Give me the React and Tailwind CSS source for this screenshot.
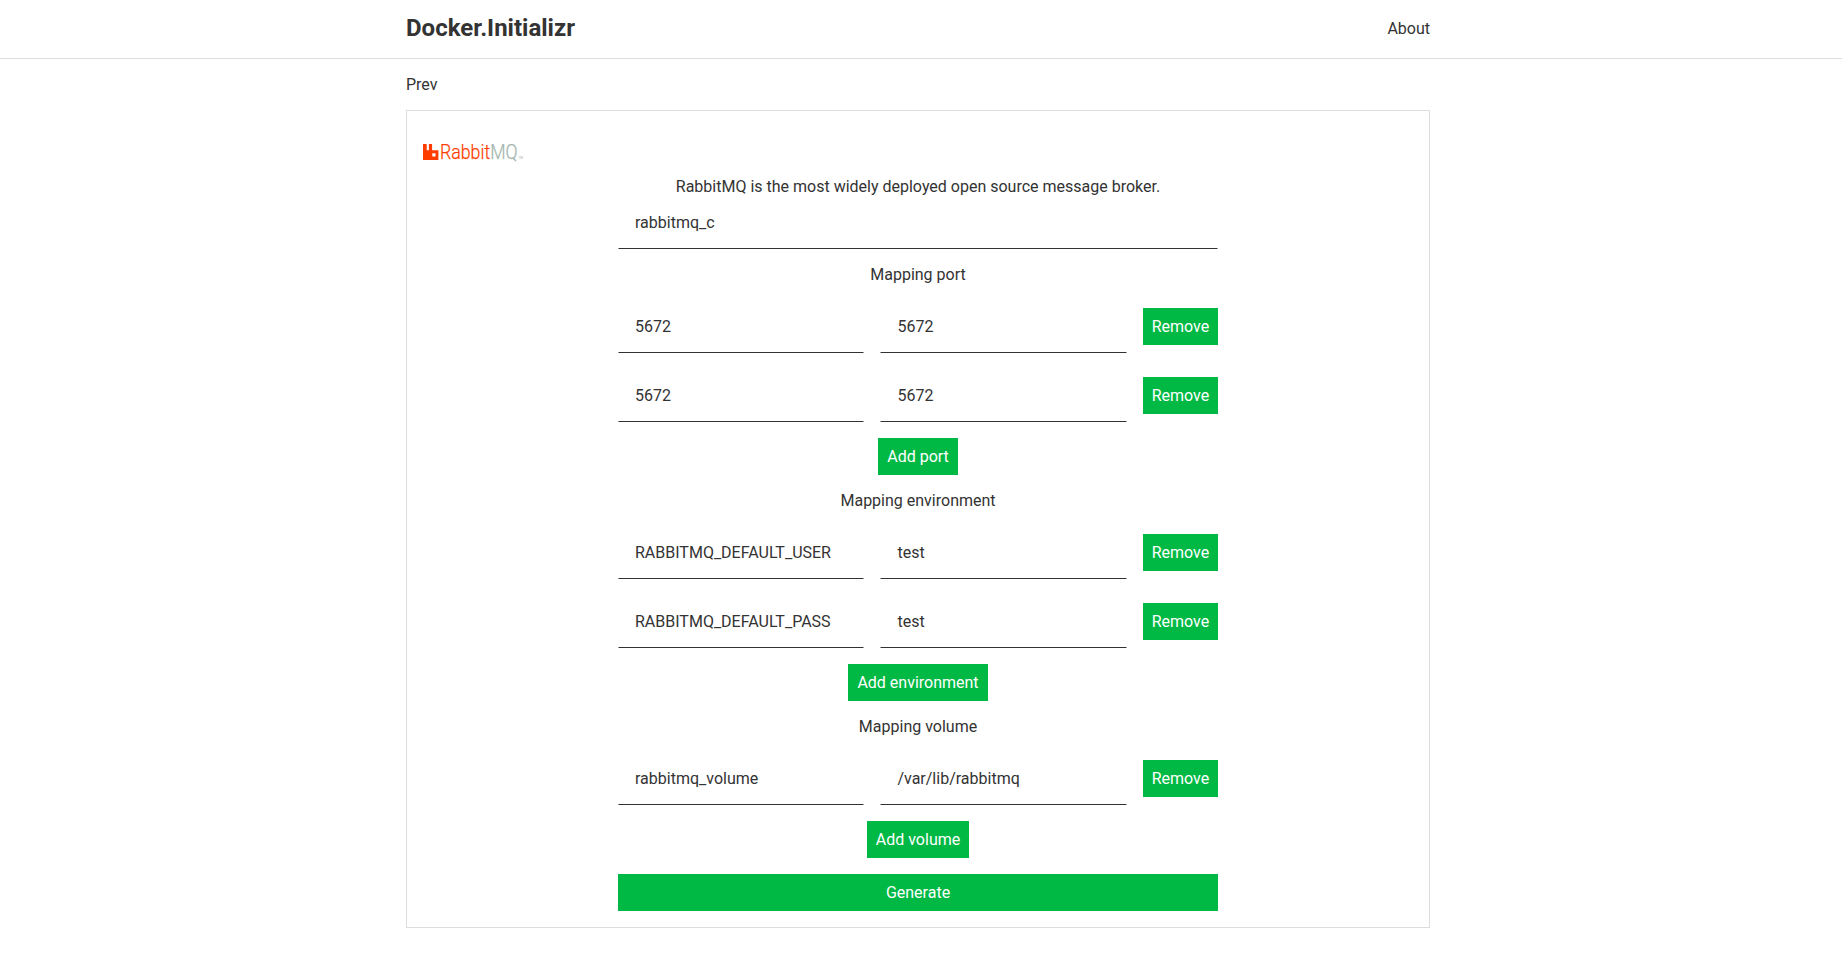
const FIELD =
  "block w-full min-w-0 h-[53px] p-4 leading-[19px] bg-transparent border border-transparent border-b-[#333333] outline-none rounded-none";
const BUTTON =
  "h-[37px] p-2 leading-[19px] border border-[#00b944] bg-[#00b944] text-white rounded-none";
const REMOVE_BUTTON =
  "h-[37px] w-[75.2px] py-2 leading-[19px] bg-[#00b944] text-white rounded-none";

const SECTIONS = [
  {
    title: "Mapping port",
    action: "Add port",
    rows: [
      ["5672", "5672"],
      ["5672", "5672"],
    ],
  },
  {
    title: "Mapping environment",
    action: "Add environment",
    rows: [
      ["RABBITMQ_DEFAULT_USER", "test"],
      ["RABBITMQ_DEFAULT_PASS", "test"],
    ],
  },
  {
    title: "Mapping volume",
    action: "Add volume",
    rows: [["rabbitmq_volume", "/var/lib/rabbitmq"]],
  },
];

function RabbitLogo() {
  return (
    <svg className="block" width="100" height="50" viewBox="0 0 100 50" role="img" aria-label="RabbitMQ">
      <path
        fill="#ff3c00"
        fillRule="evenodd"
        d="M0.300 17h3.100q.3 0 .3.300v5.700q0 .3.3.3h1.600q.3 0 .3-.3v-5.700q0-.3.3-.3h2.600q.3 0 .3.300v5.700q0 .3.3.3h5.700q.3 0 .3.300v9.100q0 .3-.3.300H.300q-.3 0-.3-.3V17.300q0-.3.3-.3zM9.300 26.300v3.200h3.200v-3.200z"
      />
      <text
        x="17"
        y="32"
        fontFamily="Roboto, sans-serif"
        fontWeight="300"
        fontSize="21"
        strokeWidth="0.25"
        textLength="77.500"
        lengthAdjust="spacingAndGlyphs"
      >
        <tspan fill="#ff3c00" stroke="#ff3c00">Rabbit</tspan>
        <tspan fill="#a3b5ae" stroke="#a3b5ae">MQ</tspan>
      </text>
      <text x="95.500" y="32" fill="#a3b5ae" fontFamily="Roboto, sans-serif" fontSize="3">
        TM
      </text>
    </svg>
  );
}

function MappingSection({ title, action, rows }) {
  return (
    <section className="flex flex-col items-center gap-4">
      <h2>{title}</h2>
      {rows.map(([left, right], i) => (
        <div key={i} className="grid w-full grid-cols-[1fr_1fr_auto] items-center gap-4">
          <input className={FIELD} defaultValue={left} />
          <input className={FIELD} defaultValue={right} />
          <button className={REMOVE_BUTTON}>Remove</button>
        </div>
      ))}
      <button className={BUTTON}>{action}</button>
    </section>
  );
}

export default function App() {
  return (
    <div className="min-h-screen bg-white font-['Roboto',sans-serif] text-base leading-[19px] text-[#333333]">
      <header className="h-[59px] border-b border-[#dddddd] pr-1.5">
        <div className="mx-auto flex w-5xl items-center justify-between pt-[14px]">
          <h1 className="text-2xl leading-[28px] font-bold">Docker.Initializr</h1>
          <a href="#about">About</a>
        </div>
      </header>
      <div className="pr-1.5">
        <main className="mx-auto flex w-5xl flex-col gap-4 pt-4">
          <a href="#prev" className="self-start">
            Prev
          </a>
          <div className="border border-[#dddddd] p-4">
            <RabbitLogo />
            <p className="text-center">RabbitMQ is the most widely deployed open source message broker.</p>
            <form className="mx-auto flex w-[600px] flex-col gap-4" onSubmit={(e) => e.preventDefault()}>
              <input className={FIELD} defaultValue="rabbitmq_c" />
              {SECTIONS.map((section) => (
                <MappingSection key={section.title} {...section} />
              ))}
              <button className={BUTTON}>Generate</button>
            </form>
          </div>
        </main>
      </div>
    </div>
  );
}
